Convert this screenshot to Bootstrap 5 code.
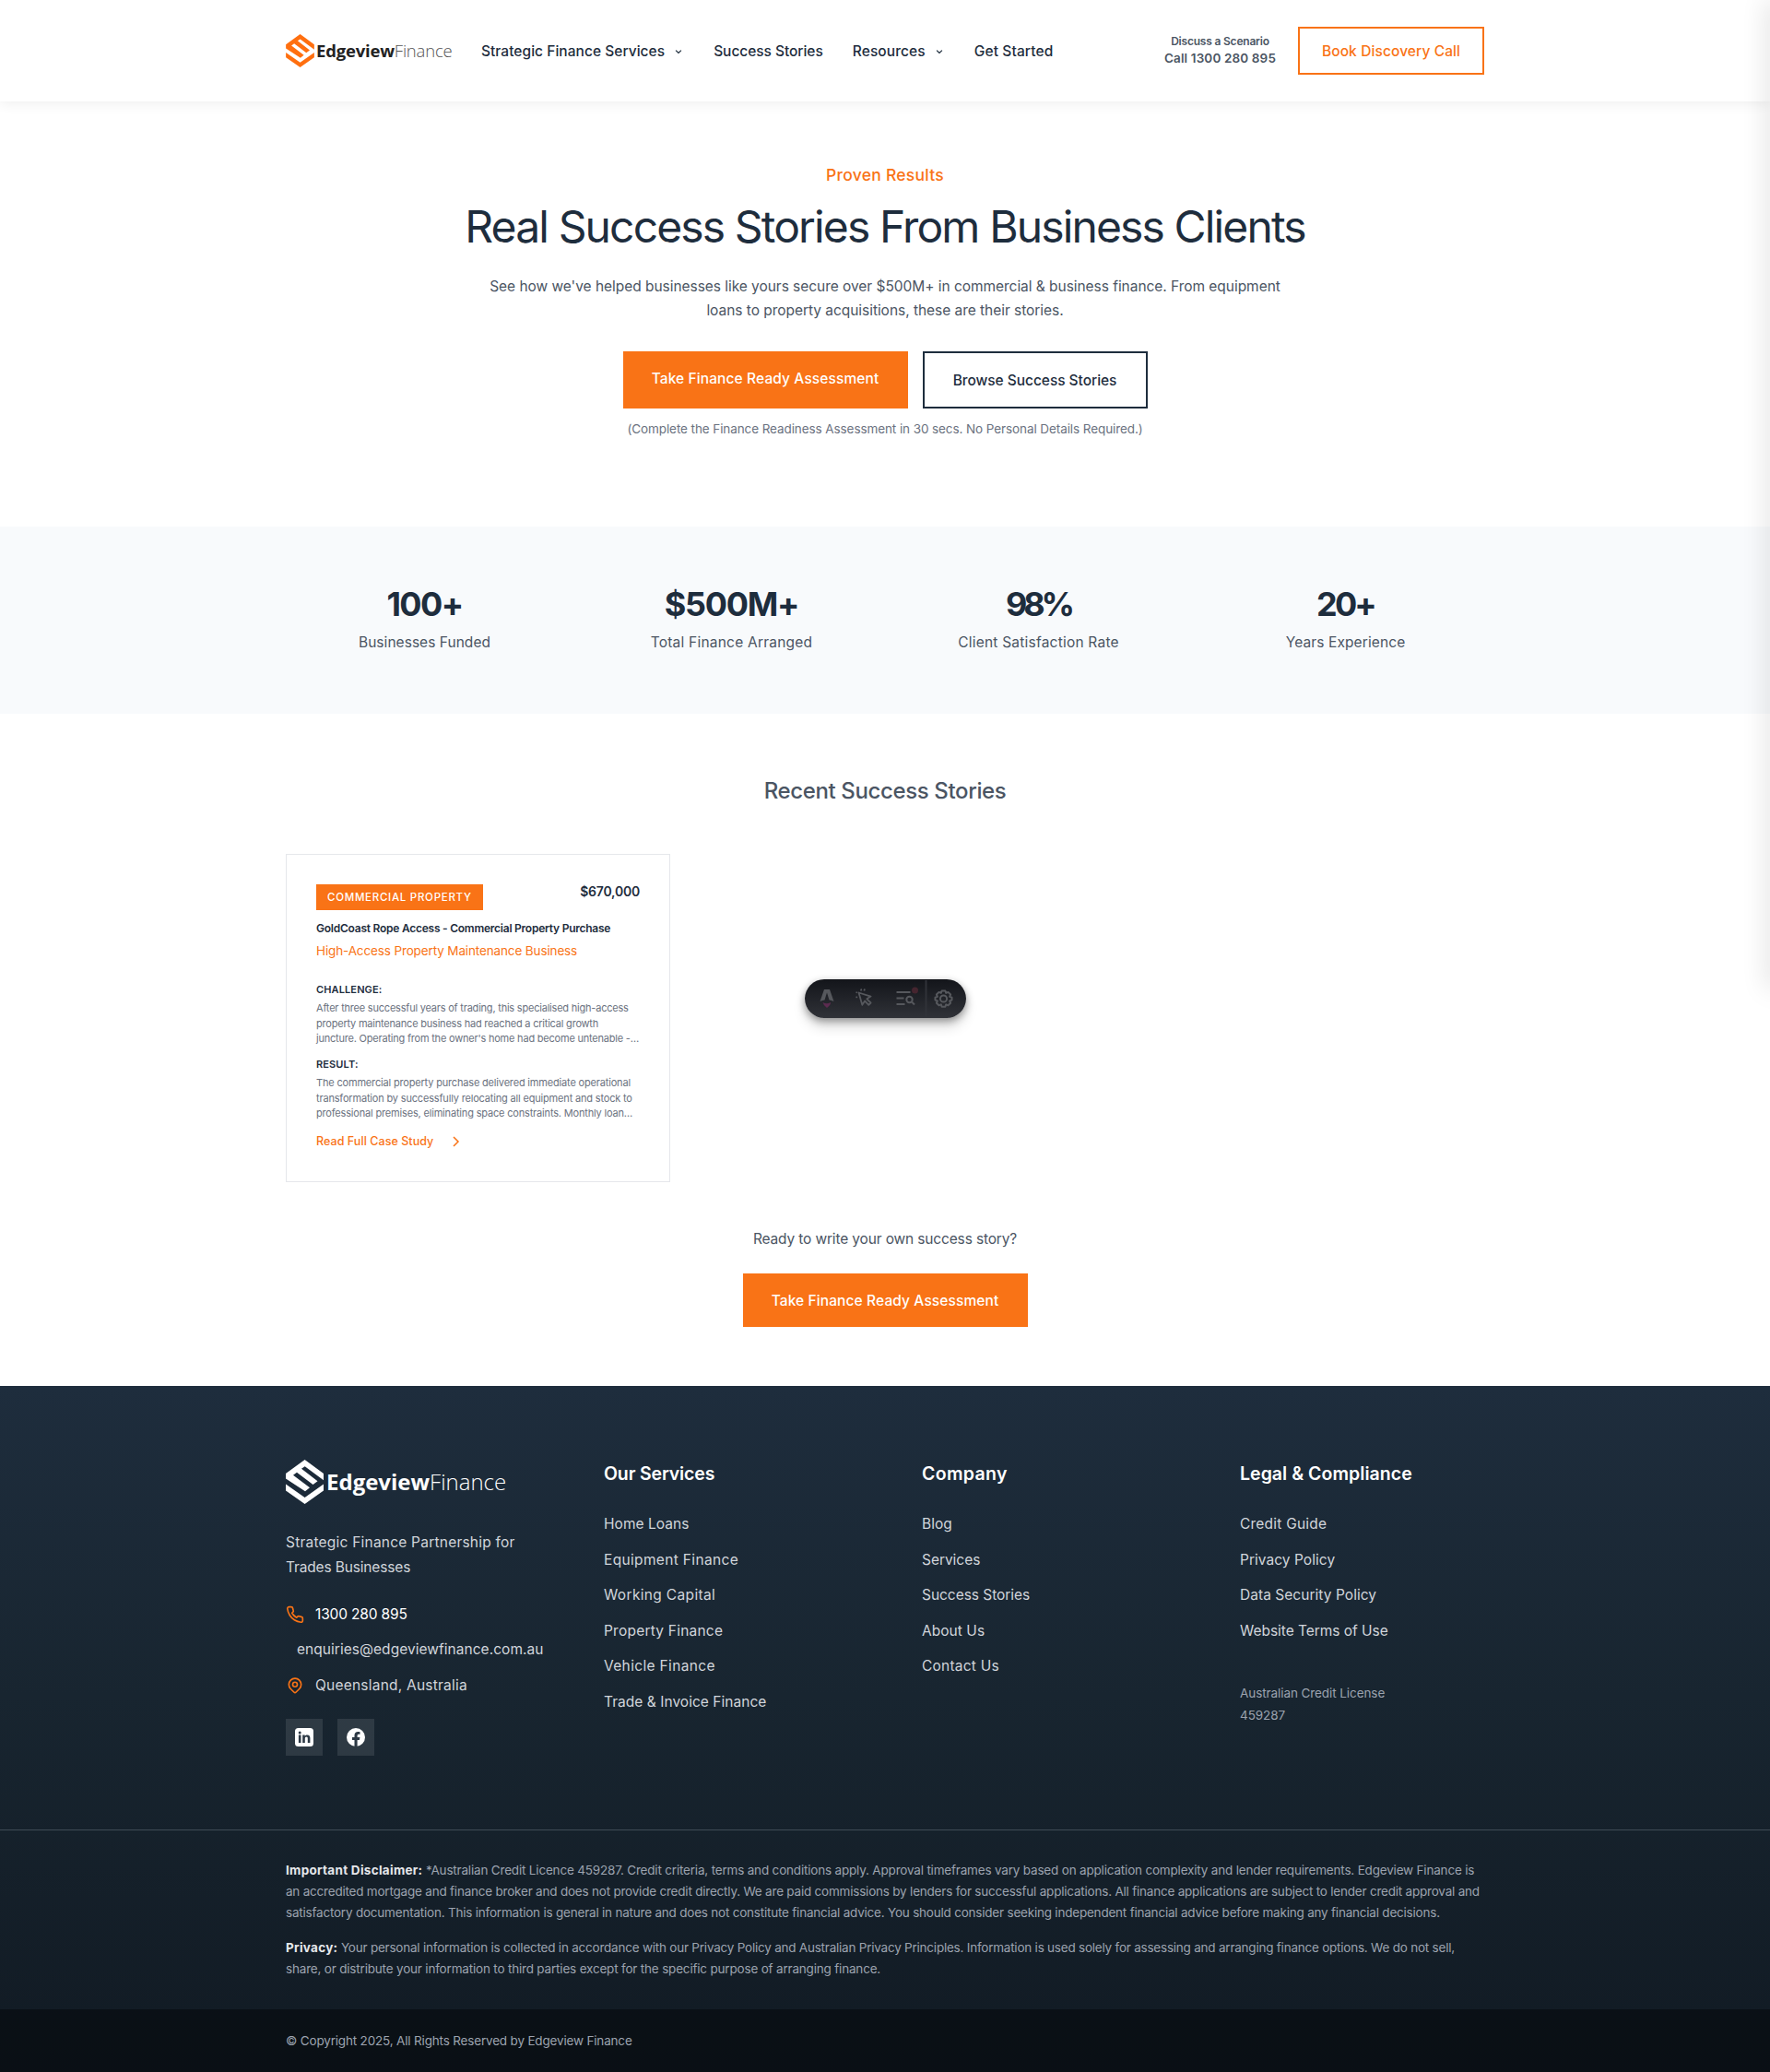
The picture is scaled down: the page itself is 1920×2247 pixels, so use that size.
<!DOCTYPE html>
<html lang="en">
<head>
<meta charset="utf-8">
<title>Success Stories | Edgeview Finance</title>
<meta name="viewport" content="width=device-width, initial-scale=1">
<link href="https://cdn.jsdelivr.net/npm/bootstrap@5.3.0/dist/css/bootstrap.min.css" rel="stylesheet">
<style>
:root{--brand:#f97316;--navy:#1e2d3d;--slate:#4b5563;--grey:#6b7280}
body{font-family:Inter,"Liberation Sans",sans-serif;font-size:15.5px;line-height:26px;color:var(--slate);background:#fff;overflow-x:hidden;position:relative}
a{text-decoration:none;color:inherit}
.wrap{width:1300px;margin:0 auto}
/* letter spacing steps */
.p1{letter-spacing:-.15px}.p2{letter-spacing:-.04px}.p3{letter-spacing:.04px}.p4{letter-spacing:.11px}.p5{letter-spacing:.22px}.p6{letter-spacing:.34px}
.m15{letter-spacing:-.175px}.m2{letter-spacing:-.212px}
/* header */
.topbar{height:110px;background:#fff;box-shadow:0 2px 14px rgba(0,0,0,.07)}
.brand-name{font-family:"Open Sans","Noto Sans",sans-serif;font-weight:700;white-space:nowrap}
.brand-name span{font-weight:300}
.brand-top{font-size:18.5px;letter-spacing:-.2px;color:#222;width:149px;margin-left:2px}
.brand-top span{color:#555}
.brand-foot{font-size:24px;color:#fff;margin-left:3px;letter-spacing:0}
.menu{color:var(--navy);font-weight:500;gap:32px;margin-left:30px;padding-top:2px}
.menu svg{margin:-1px 0 0 9px}
.call-box{font-weight:600;line-height:18px;padding-bottom:2px}
.call-box .top{font-size:12px;letter-spacing:-.2px}
.call-box .num{font-size:13.5px;letter-spacing:.13px}
.btn{border-radius:0;font-weight:500;font-size:15.5px;line-height:26px;padding:1px 0 0;white-space:nowrap}
.btn-book{border:2px solid var(--brand);color:var(--brand);width:202px;height:52px;margin-left:24px}
.btn-fill{background:var(--brand);border:0;color:#fff;width:309px}
.btn-outline-navy{border:2px solid var(--navy);color:var(--navy);width:244px;height:62px}
.side-glow{position:absolute;top:0;right:-10px;width:10px;height:1072px;box-shadow:0 0 28px rgba(0,0,0,.22);z-index:5}
/* hero */
.hero{height:461px;padding-top:66px}
.eyebrow{font-size:17.5px;font-weight:500;line-height:28px;color:var(--brand);letter-spacing:.26px}
.hero h1{font-size:48px;font-weight:400;line-height:58px;color:var(--navy);letter-spacing:-1.87px;margin:13px 0 23px}
.cta-row{margin-top:31px}
.note{font-size:13.5px;line-height:22px;color:var(--grey);letter-spacing:-.09px;margin-top:11px}
/* stats */
.stats{height:203px;background:#f8fafc;padding-top:57px}
.stats .wrap{display:grid;grid-template-columns:repeat(4,1fr);gap:32px}
.stat-num{font-size:36px;font-weight:700;line-height:54px;color:var(--navy);margin-bottom:2px}
.t100{letter-spacing:-1.6px}.t500{letter-spacing:-1.25px}.t98{letter-spacing:-4.2px}.t20{letter-spacing:-2.8px}
/* stories */
.stories{height:729px;padding-top:66px}
.stories h2{font-size:24px;font-weight:500;line-height:36px;letter-spacing:-.37px;margin:0 0 50px}
.story{width:417px;height:356px;border:1px solid #e5e7eb;padding:32px}
.tag{background:var(--brand);color:#fff;font-size:11.5px;font-weight:500;letter-spacing:.72px;width:181px;height:28px;line-height:28px;padding-left:12px;white-space:nowrap}
.price{font-size:14px;font-weight:600;line-height:16px;letter-spacing:-.22px;color:var(--navy)}
.story h3{font-size:12px;font-weight:600;line-height:20px;letter-spacing:-.24px;color:var(--navy);margin:10px 0 3px;white-space:nowrap}
.trade{font-size:13.5px;line-height:22px;letter-spacing:-.13px;color:var(--brand);margin-bottom:23px}
.story h4{font-size:11px;font-weight:600;line-height:16px;letter-spacing:.12px;color:var(--navy);margin:0 0 4px}
.story p{font-size:11px;line-height:16.5px;color:var(--grey);margin:0 0 11.5px;white-space:nowrap}
.more{font-size:12.5px;font-weight:500;line-height:20px;letter-spacing:.06px;color:var(--brand);margin-top:12.5px}
.more svg{margin-left:20px}
.ready{margin-top:49px}
.btn-ready{height:58px;margin-top:24px}
/* floating toolbar */
.dev-bar{position:absolute;left:873px;top:1062px;width:175px;height:42px;border-radius:21px;background:linear-gradient(180deg,#13151a,#303238);box-shadow:0 3px 8px rgba(0,0,0,.38),0 10px 14px rgba(0,0,0,.13)}
/* footer */
.foot{background:linear-gradient(180deg,#1e2d3d 0%,#182530 45%,#111a23 100%);color:#d1d5db}
.foot-top{height:481px;padding-top:80px}
.foot-grid{display:grid;grid-template-columns:repeat(4,265px);gap:80px}
.about{line-height:26.6px;margin:29px 0 25.4px}
.contact-row{height:24px;line-height:24px;gap:12px;margin-bottom:14.6px;white-space:nowrap}
.socials{margin-top:24px}
.social{width:40px;height:40px;background:rgba(255,255,255,.1)}
.foot h5{font-size:19.5px;font-weight:600;line-height:28px;color:#fff;margin:1px 0 29px;white-space:nowrap}
.foot li{line-height:24px;margin-bottom:14.6px;white-space:nowrap}
.licence{font-size:13.5px;line-height:24px;letter-spacing:-.08px;color:#9ca3af;margin-top:43.500px}
.legal{height:195px;border-top:1px solid #3f4b56;padding-top:32px;font-size:13.5px;line-height:23px;color:#9ca3af}
.legal p{margin:0 0 15px;white-space:nowrap}
.legal strong{color:#e5e7eb;letter-spacing:.28px}
.legal .l1{letter-spacing:-.187px}
.legal .l2{letter-spacing:-.225px}
.copyright{height:68px;padding-top:22px;background:rgba(0,0,0,.4);font-size:13.5px;line-height:24px;color:#9ca3af}
</style>
</head>
<body>
<svg width="0" height="0" class="position-absolute"><defs>
<symbol id="mark" viewBox="0 0 41 48"><path d="M0 15 20.6 0 41 15v7.3L20.7 7.3 17 9.8l17.5 13.4-5 3.8L12 13.8l-4 2.9 18 13.6-5 4L0 20.6z"/><path d="M0 26.5 20.6 41 41 26.5v7L20.6 48 0 33.5z"/></symbol>
<symbol id="chev" viewBox="0 0 12 12"><path d="M3.1 4.6 6 7.4l2.900-2.800" fill="none" stroke="currentColor" stroke-width="1.300"/></symbol>
</defs></svg>

<header class="topbar">
  <div class="wrap h-100 d-flex align-items-center">
    <a href="#" class="d-flex align-items-center">
      <svg width="31" height="36" fill="#ff6f0f"><use href="#mark"/></svg>
      <div class="brand-name brand-top">Edgeview<span>Finance</span></div>
    </a>
    <nav class="menu d-flex">
      <a href="#" class="d-flex align-items-center"><span class="p3">Strategic Finance Services</span><svg width="12" height="12"><use href="#chev"/></svg></a>
      <a href="#" class="p2">Success Stories</a>
      <a href="#" class="d-flex align-items-center"><span class="p4">Resources</span><svg width="12" height="12"><use href="#chev"/></svg></a>
      <a href="#" class="p4">Get Started</a>
    </nav>
    <div class="call-box ms-auto text-center"><div class="top">Discuss a Scenario</div><div class="num">Call 1300 280 895</div></div>
    <a href="#" class="btn btn-book d-flex align-items-center justify-content-center p4">Book Discovery Call</a>
  </div>
</header>
<div class="side-glow"></div>

<section class="hero text-center">
  <div class="eyebrow">Proven Results</div>
  <h1>Real Success Stories From Business Clients</h1>
  <p class="p2 mb-0">See how we've helped businesses like yours secure over $500M+ in commercial &amp; business finance. From equipment<br>loans to property acquisitions, these are their stories.</p>
  <div class="cta-row d-flex justify-content-center gap-3">
    <a href="#" class="btn btn-fill d-flex align-items-center justify-content-center pb-1 p4">Take Finance Ready Assessment</a>
    <a href="#" class="btn btn-outline-navy d-flex align-items-center justify-content-center p2">Browse Success Stories</a>
  </div>
  <div class="note">(Complete the Finance Readiness Assessment in 30 secs. No Personal Details Required.)</div>
</section>

<section class="stats text-center">
  <div class="wrap">
    <div><div class="stat-num t100">100+</div><div class="p3">Businesses Funded</div></div>
    <div><div class="stat-num t500">$500M+</div><div class="p5">Total Finance Arranged</div></div>
    <div><div class="stat-num t98">98%</div><div class="p5">Client Satisfaction Rate</div></div>
    <div><div class="stat-num t20">20+</div><div class="p4">Years Experience</div></div>
  </div>
</section>

<section class="stories">
  <h2 class="text-center">Recent Success Stories</h2>
  <div class="wrap">
    <article class="story">
      <div class="d-flex justify-content-between"><div class="tag">COMMERCIAL PROPERTY</div><div class="price">$670,000</div></div>
      <h3>GoldCoast Rope Access - Commercial Property Purchase</h3>
      <div class="trade">High-Access Property Maintenance Business</div>
      <h4>CHALLENGE:</h4>
      <p class="m2">After three successful years of trading, this specialised high-access<br>property maintenance business had reached a critical growth<br>juncture. Operating from the owner's home had become untenable -…</p>
      <h4>RESULT:</h4>
      <p class="m15">The commercial property purchase delivered immediate operational<br>transformation by successfully relocating all equipment and stock to<br>professional premises, eliminating space constraints. Monthly loan…</p>
      <a href="#" class="more d-flex align-items-center"><span>Read Full Case Study</span><svg width="9" height="12" viewBox="0 0 9 12" fill="none" stroke="currentColor" stroke-width="1.500"><path d="M2 1 7 6 2 11"/></svg></a>
    </article>
  </div>
  <div class="ready text-center p1">Ready to write your own success story?</div>
  <a href="#" class="btn btn-fill btn-ready d-flex align-items-center justify-content-center mx-auto p4">Take Finance Ready Assessment</a>
</section>

<footer class="foot">
  <div class="foot-top"><div class="wrap foot-grid">
    <div>
      <div class="d-flex align-items-center">
        <svg width="41" height="48" fill="#fff"><use href="#mark"/></svg>
        <div class="brand-name brand-foot">Edgeview<span>Finance</span></div>
      </div>
      <div class="about"><span class="p5">Strategic Finance Partnership for</span><br><span class="p1">Trades Businesses</span></div>
      <div class="contact-row d-flex align-items-center text-white p1"><svg width="20" height="20" viewBox="0 0 24 24" fill="none" stroke="#f97316" stroke-width="2" stroke-linecap="round" stroke-linejoin="round"><path d="M22 16.92v3a2 2 0 0 1-2.18 2 19.79 19.79 0 0 1-8.63-3.07 19.5 19.5 0 0 1-6-6 19.79 19.79 0 0 1-3.07-8.67A2 2 0 0 1 4.11 2h3a2 2 0 0 1 2 1.72c.13.96.36 1.9.7 2.81a2 2 0 0 1-.45 2.11L8.09 9.91a16 16 0 0 0 6 6l1.27-1.27a2 2 0 0 1 2.11-.45c.91.34 1.85.57 2.81.7A2 2 0 0 1 22 16.92z"/></svg>1300 280 895</div>
      <div class="contact-row d-flex align-items-center p3"><i></i>enquiries@edgeviewfinance.com.au</div>
      <div class="contact-row d-flex align-items-center p5"><svg width="20" height="20" viewBox="0 0 24 24" fill="none" stroke="#f97316" stroke-width="2" stroke-linejoin="round"><circle cx="12" cy="10.500" r="3"/><path d="m17.660 16.160-4.250 4.240a2 2 0 0 1-2.820 0l-4.250-4.240a8 8 0 1 1 11.320 0z"/></svg>Queensland, Australia</div>
      <div class="socials d-flex gap-3">
        <a href="#" class="social d-flex align-items-center justify-content-center"><svg width="20" height="20" viewBox="0 0 20 20"><rect width="20" height="20" rx="3.500" fill="#fff"/><g fill="#2c3844"><circle cx="5.200" cy="4.900" r="1.500"/><path d="M3.900 7.600h2.600v8.300H3.900zM8.200 7.600h2.500v1.200c.5-.9 1.500-1.400 2.600-1.400 2.300 0 3.100 1.400 3.100 3.600v4.900h-2.600v-4.400c0-1.100-.2-2-1.400-2-1.200 0-1.600.9-1.600 2v4.400H8.200z"/></g></svg></a>
        <a href="#" class="social d-flex align-items-center justify-content-center"><svg width="20" height="20" viewBox="0 0 20 20"><circle cx="10" cy="10" r="10" fill="#fff"/><path fill="#2c3844" d="M8.500 20v-7H6v-2.900h2.500V7.900c0-2.500 1.500-3.900 3.800-3.900.8 0 1.600.1 2.200.2v2.500h-1.300c-1.200 0-1.600.7-1.600 1.500v1.900h2.800l-.5 2.900h-2.300v7z"/></svg></a>
      </div>
    </div>
    <div>
      <h5 class="p1">Our Services</h5>
      <ul class="list-unstyled mb-0"><li class="p3">Home Loans</li><li class="p6">Equipment Finance</li><li class="p6">Working Capital</li><li class="p5">Property Finance</li><li class="p6">Vehicle Finance</li><li class="p3">Trade &amp; Invoice Finance</li></ul>
    </div>
    <div>
      <h5 class="p6">Company</h5>
      <ul class="list-unstyled mb-0"><li class="p3">Blog</li><li class="p2">Services</li><li class="p2">Success Stories</li><li class="p3">About Us</li><li class="p5">Contact Us</li></ul>
    </div>
    <div>
      <h5 class="p3">Legal &amp; Compliance</h5>
      <ul class="list-unstyled mb-0"><li class="p5">Credit Guide</li><li class="p3">Privacy Policy</li><li class="p3">Data Security Policy</li><li class="p2 mb-0">Website Terms of Use</li></ul>
      <div class="licence">Australian Credit License<br>459287</div>
    </div>
  </div></div>
  <div class="legal"><div class="wrap">
    <p class="m2"><span class="l1"><strong>Important Disclaimer:</strong> *Australian Credit Licence 459287. Credit criteria, terms and conditions apply. Approval timeframes vary based on application complexity and lender requirements. Edgeview Finance is</span><br>an accredited mortgage and finance broker and does not provide credit directly. We are paid commissions by lenders for successful applications. All finance applications are subject to lender credit approval and<br>satisfactory documentation. This information is general in nature and does not constitute financial advice. You should consider seeking independent financial advice before making any financial decisions.</p>
    <p class="l2"><strong>Privacy:</strong> Your personal information is collected in accordance with our Privacy Policy and Australian Privacy Principles. Information is used solely for assessing and arranging finance options. We do not sell,<br><span class="l1">share, or distribute your information to third parties except for the specific purpose of arranging finance.</span></p>
  </div></div>
  <div class="copyright"><div class="wrap l1 m15">© Copyright 2025, All Rights Reserved by Edgeview Finance</div></div>
</footer>

<div class="dev-bar">
  <svg class="d-block" width="174" height="42" viewBox="0 0 174 42" fill="none" stroke="#56585d" stroke-width="2">
    <path d="M21 11h6l4.500 13q-3-1.500-5-1.500l-2.500-8-2.500 8q-2 0-5 1.500z" fill="#56585d" stroke="none"/>
    <path d="M19.500 25q4.500 2.500 8.500 0 .5 2.500-4 6-4-3-4.500-6z" fill="#5c2b50" stroke="none"/>
    <path d="m58.500 14.500 3.800 13.300 2.800-4.300 4.200 4.300 2.300-2.300-4.300-4.200 4.300-2.700z" stroke-width="1.800" stroke-linejoin="round"/>
    <path d="m61 10.500.3 2M65 10.500l-.7 2M57 14.500l-1.500-.5M57 19l-1.500.8" stroke-width="1.800"/>
    <path d="M99.500 14h15M99.500 20.500h8M99.500 27h9"/><circle cx="113.500" cy="22" r="3.200"/><path d="m116 24.500 3 3"/>
    <circle cx="119.500" cy="12" r="3.500" fill="#45252f" stroke="none"/>
    <path d="M131.500 1v40" stroke="#303238"/>
    <circle cx="150.500" cy="21" r="3.600"/>
    <path d="M148.600 12.500h3.800l.8 2.400 2.300-1 2.600 2.600-1 2.300 2.400.8v3l-2.400.8 1 2.300-2.600 2.600-2.300-1-.8 2.400h-3.800l-.8-2.400-2.300 1-2.600-2.600 1-2.300-2.400-.8v-3l2.400-.8-1-2.300 2.600-2.600 2.300 1z" stroke-linejoin="round"/>
  </svg>
</div>
<script src="https://cdn.jsdelivr.net/npm/bootstrap@5.3.0/dist/js/bootstrap.bundle.min.js"></script>
</body>
</html>
